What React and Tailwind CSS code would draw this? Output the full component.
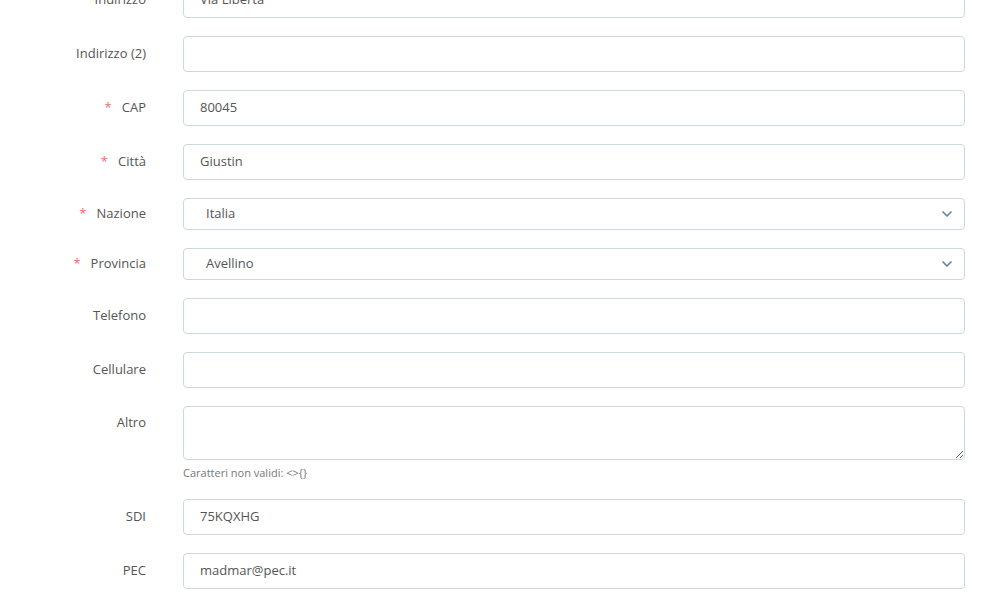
import { ChevronDown } from 'lucide-react'

const FIELDS = [
  { label: 'Indirizzo', value: 'Via Libertà' },
  { label: 'Indirizzo (2)', value: '' },
  { label: 'CAP', value: '80045', required: true },
  { label: 'Città', value: 'Giustin', required: true },
  { label: 'Nazione', value: 'Italia', required: true, select: true },
  { label: 'Provincia', value: 'Avellino', required: true, select: true },
  { label: 'Telefono', value: '' },
  { label: 'Cellulare', value: '' },
  { label: 'Altro', value: '', textarea: true },
  { label: 'SDI', value: '75KQXHG' },
  { label: 'PEC', value: 'madmar@pec.it' },
]

function Label({ field }) {
  const pad = field.select ? 'pt-[6px]' : field.textarea ? 'pt-[7px]' : 'pt-[8px]'
  return (
    <div className={`w-[146px] shrink-0 text-right text-[13px] leading-[18px] text-[#555] ${pad}`}>
      {field.required && <span className="text-[#ef6b6b] mr-[10px]">*</span>}
      {field.label}
    </div>
  )
}

export default function App() {
  return (
    <div className="w-[1000px] h-[613px] overflow-hidden bg-white" style={{ fontFamily: '"Open Sans", "Liberation Sans", sans-serif' }}>
      <div className="mt-[-18px] flex flex-col">
        {FIELDS.map((f) => (
          <div key={f.label} className="flex items-start mb-[18px]">
            <Label field={f} />
            <div className="ml-[37px] w-[782px]">
              {f.select ? (
                <div className="h-[32px] flex items-center justify-between pl-[22px] pr-[9px] border border-[#cbd8de] rounded-[4px] text-[13px] text-[#555]">
                  <span>{f.value}</span>
                  <ChevronDown className="w-[16px] h-[16px] text-[#5f84a0]" strokeWidth={2.5} />
                </div>
              ) : f.textarea ? (
                <>
                  <textarea
                    readOnly
                    className="block w-full h-[54px] border border-[#cbd8de] rounded-[4px] px-[16px] py-[8px] text-[13px] text-[#555] outline-none"
                  />
                  <div className="mt-[5px] text-[11px] leading-[16px] text-[#777]">Caratteri non validi: &lt;&gt;{'{}'}</div>
                </>
              ) : (
                <div className="h-[36px] flex items-center px-[16px] border border-[#cbd8de] rounded-[4px] text-[13px] text-[#555]">
                  {f.value}
                </div>
              )}
            </div>
          </div>
        ))}
      </div>
    </div>
  )
}
